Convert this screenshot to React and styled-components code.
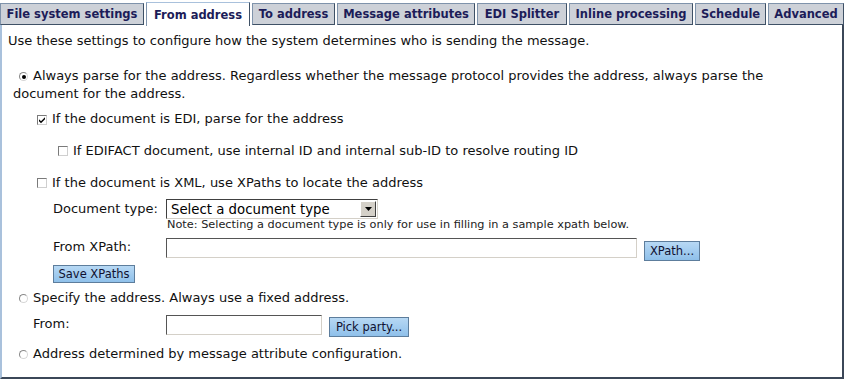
import React from 'react'
import styled, { createGlobalStyle } from 'styled-components'

const Global = createGlobalStyle`
  body {
    margin: 0;
    background: #ffffff;
    font-family: "DejaVu Sans", Verdana, sans-serif;
  }
`;

const Page = styled.div`
  width: 845px;
  height: 382px;
  overflow: hidden;
`;

const TabBar = styled.div`
  display: flex;
  align-items: flex-end;
  gap: 2px;
  height: 25px;
  position: relative;
  z-index: 1;
`;

const Tab = styled.div`
  width: ${p => p.$w}px;
  height: ${p => (p.$active ? '24px' : '22px')};
  display: flex;
  align-items: center;
  justify-content: center;
  box-sizing: border-box;
  font-size: 11.5px;
  font-weight: bold;
  color: #1c1c58;
  background: ${p => (p.$active ? '#ffffff' : '#cdd1d8')};
  border: 1px solid #7f93ab;
  border-top-color: ${p => (p.$active ? '#a9c1dc' : '#7f93ab')};
  border-right-color: #3f5166;
  border-bottom: ${p => (p.$active ? 'none' : '1px solid #3f5166')};
  white-space: nowrap;
  margin-bottom: ${p => (p.$active ? '-1px' : '0')};
`;

const Panel = styled.div`
  width: 844px;
  height: 354px;
  box-sizing: border-box;
  border-left: 2px solid #a9c1dc;
  border-right: 2px solid #3b4758;
  border-bottom: 2px solid #3b4758;
  padding: 7px 40px 7px 6px;
  font-size: 13px;
  color: #111;
`;

const Line = styled.div`
  line-height: 18px;
  margin-top: ${p => p.$top || 0}px;
  padding-left: ${p => p.$indent || 0}px;
`;

const Radio = styled.span`
  display: inline-block;
  box-sizing: border-box;
  width: 9px;
  height: 9px;
  border-radius: 50%;
  border: 1px solid #8a8a8a;
  border-right-color: #d6d6d6;
  border-bottom-color: #d6d6d6;
  background: #fff;
  margin: 0 5px 0 6px;
  vertical-align: -1px;
  position: relative;

  &::after {
    content: '';
    display: ${p => (p.$checked ? 'block' : 'none')};
    position: absolute;
    left: 1.5px;
    top: 1.5px;
    width: 4px;
    height: 4px;
    border-radius: 50%;
    background: #000;
  }
`;

const Check = styled.span`
  display: inline-flex;
  align-items: center;
  justify-content: center;
  box-sizing: border-box;
  width: 10px;
  height: 10px;
  border: 1px solid #7a7a7a;
  border-right-color: #cfcfcf;
  border-bottom-color: #cfcfcf;
  background: #fff;
  margin-right: 5px;
  vertical-align: -1px;
`;

const FieldRow = styled.div`
  display: flex;
  align-items: flex-start;
  margin-top: ${p => p.$top || 0}px;
  padding-left: ${p => p.$indent || 0}px;
`;

const Label = styled.div`
  width: ${p => p.$w}px;
  line-height: ${p => p.$lh || 18}px;
  flex-shrink: 0;
`;

const SelectBox = styled.div`
  width: 212px;
  height: 20px;
  box-sizing: border-box;
  border: 1px solid #404040;
  border-right-color: #d4d0c8;
  border-bottom-color: #d4d0c8;
  display: flex;
  align-items: center;
  justify-content: space-between;
  padding: 0 1px 0 4px;
  font-size: 13.3px;
  color: #000;
  background: #fff;
`;

const ArrowBox = styled.span`
  width: 16px;
  height: 16px;
  box-sizing: border-box;
  background: #d4d0c8;
  border: 1px solid;
  border-color: #ffffff #404040 #404040 #ffffff;
  display: flex;
  align-items: center;
  justify-content: center;
`;

const Note = styled.div`
  margin-left: 159px;
  height: 12px;
  line-height: 12px;
  font-size: 11.3px;
  color: #222;
  white-space: nowrap;
`;

const TextBox = styled.div`
  width: ${p => p.$w}px;
  height: 20px;
  box-sizing: border-box;
  border: 1px solid #555;
  border-right-color: #d4d0c8;
  border-bottom-color: #d4d0c8;
  background: #fff;
`;

const Button = styled.div`
  width: ${p => p.$w}px;
  height: ${p => p.$h || 20}px;
  box-sizing: border-box;
  margin-top: ${p => p.$top || 0}px;
  margin-left: ${p => p.$left || 0}px;
  display: flex;
  align-items: center;
  justify-content: center;
  font-size: 11.5px;
  color: #101030;
  background: linear-gradient(#b7d8f4, #8fc0ea);
  border: 1px solid;
  border-color: #cfe6fa #2f4b66 #2f4b66 #cfe6fa;
  outline: 1px solid #5d7d9c;
  outline-offset: -1px;
  white-space: nowrap;
`;

const tabs = [
  ['File system settings', 144],
  ['From address', 104],
  ['To address', 83],
  ['Message attributes', 138],
  ['EDI Splitter', 90],
  ['Inline processing', 124],
  ['Schedule', 71],
  ['Advanced', 76],
];

function CheckMark() {
  return (
    <svg width="8" height="8" viewBox="0 0 8 8">
      <path d="M1 3.2 L3 5.2 L7 1.2 L7 3.2 L3 7.2 L1 5.2 Z" fill="#000" />
    </svg>
  );
}

export default function App() {
  return (
    <Page>
      <Global />
      <TabBar>
        {tabs.map(([t, w]) => (
          <Tab key={t} $w={w} $active={t === 'From address'}>{t}</Tab>
        ))}
      </TabBar>
      <Panel>
        <Line>Use these settings to configure how the system determines who is sending the message.</Line>
        <Line $top={17} $indent={5}>
          <Radio $checked />Always parse for the address. Regardless whether the message protocol provides the address, always parse the document for the address.
        </Line>
        <Line $top={7} $indent={29}>
          <Check><CheckMark /></Check>If the document is EDI, parse for the address
        </Line>
        <Line $top={14} $indent={50}>
          <Check />If EDIFACT document, use internal ID and internal sub-ID to resolve routing ID
        </Line>
        <Line $top={14} $indent={29}>
          <Check />If the document is XML, use XPaths to locate the address
        </Line>
        <FieldRow $top={7} $indent={45}>
          <Label $w={113} $lh={20}>Document type:</Label>
          <SelectBox>
            Select a document type
            <ArrowBox>
              <svg width="7" height="4" viewBox="0 0 7 4"><path d="M0 0 H7 L3.5 4 Z" fill="#000" /></svg>
            </ArrowBox>
          </SelectBox>
        </FieldRow>
        <Note>Note: Selecting a document type is only for use in filling in a sample xpath below.</Note>
        <FieldRow $top={7} $indent={45}>
          <Label $w={113}>From XPath:</Label>
          <TextBox $w={471} />
          <Button $w={56} $top={3} $left={7}>XPath...</Button>
        </FieldRow>
        <FieldRow $top={4} $indent={45}>
          <Button $w={82} $h={18}>Save XPaths</Button>
        </FieldRow>
        <Line $top={6} $indent={5}>
          <Radio />Specify the address. Always use a fixed address.
        </Line>
        <FieldRow $top={8} $indent={25}>
          <Label $w={133}>From:</Label>
          <TextBox $w={156} />
          <Button $w={80} $top={2} $left={7}>Pick party...</Button>
        </FieldRow>
        <Line $top={8} $indent={5}>
          <Radio />Address determined by message attribute configuration.
        </Line>
      </Panel>
    </Page>
  );
}
